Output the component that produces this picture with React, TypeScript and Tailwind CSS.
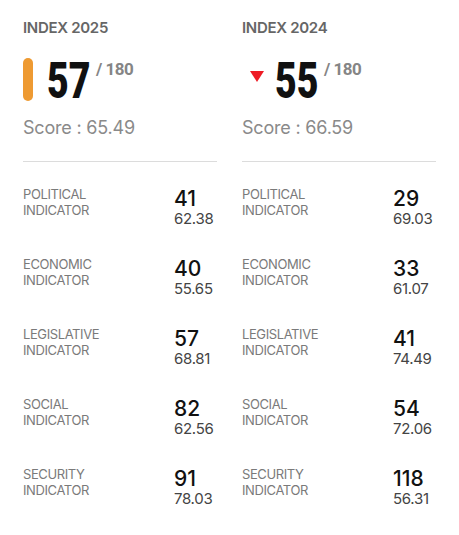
const years = [
  {
    label: "INDEX 2025",
    rank: 57,
    score: "65.49",
    marker: "bar",
    rows: [
      ["POLITICAL", "41", "62.38"],
      ["ECONOMIC", "40", "55.65"],
      ["LEGISLATIVE", "57", "68.81"],
      ["SOCIAL", "82", "62.56"],
      ["SECURITY", "91", "78.03"],
    ],
  },
  {
    label: "INDEX 2024",
    rank: 55,
    score: "66.59",
    marker: "down",
    rows: [
      ["POLITICAL", "29", "69.03"],
      ["ECONOMIC", "33", "61.07"],
      ["LEGISLATIVE", "41", "74.49"],
      ["SOCIAL", "54", "72.06"],
      ["SECURITY", "118", "56.31"],
    ],
  },
];

function Column({ data }: { data: (typeof years)[number] }) {
  return (
    <div className="flex flex-col">
      <div className="text-[15px] leading-[18px] font-semibold tracking-[-0.3px] text-[#666]">
        {data.label}
      </div>
      <div className="mt-[21px] flex items-start h-[44px]">
        {data.marker === "bar" ? (
          <div className="w-[10px] h-[43px] rounded-full bg-[#ee9a32]" />
        ) : (
          <svg width="14" height="11" viewBox="0 0 14 11" className="ml-[8px] mt-[13px]">
            <polygon points="0,0 14,0 7,11" fill="#ee1c25" />
          </svg>
        )}
        <div className={(data.marker === "bar" ? "ml-[14px]" : "ml-[11px]") + " flex items-start"}>
          <span className="inline-block origin-left scale-x-[0.75] mr-[-14px] font-['Roboto',sans-serif] font-black text-[50px] leading-[46px] text-[#111]">
            {data.rank}
          </span>
          <span className="ml-[5px] mt-[2px] font-['Roboto',sans-serif] text-[17px] leading-[18px] font-bold text-[#858585] tracking-[-0.5px]">
            / 180
          </span>
        </div>
      </div>
      <div className="mt-[15px] text-[18px] leading-[22px] text-[#8a8a8a] tracking-[-0.2px]">
        Score : {data.score}
      </div>
      <div className="mt-[22px] h-px bg-[#dcdcdc]" />
      <div className="mt-[24px] flex flex-col gap-[29px]">
        {data.rows.map(([name, rank, score]) => (
          <div key={name} className="flex">
            <div className="w-[151px] text-[13px] leading-[16px] text-[#7a7a7a] tracking-[-0.4px]">
              <div>{name}</div>
              <div>INDICATOR</div>
            </div>
            <div className="flex flex-col mt-[2px]">
              <span className="text-[21px] leading-[22px] font-medium text-[#111]">{rank}</span>
              <span className="text-[15px] leading-[17px] text-[#444] tracking-[-0.3px]">{score}</span>
            </div>
          </div>
        ))}
      </div>
    </div>
  );
}

export default function App() {
  return (
    <div className="w-[459px] h-[535px] bg-white px-[23px] pt-[19px] font-['Inter',sans-serif] grid grid-cols-2 gap-x-[25px] content-start">
      {years.map((y) => (
        <Column key={y.label} data={y} />
      ))}
    </div>
  );
}
